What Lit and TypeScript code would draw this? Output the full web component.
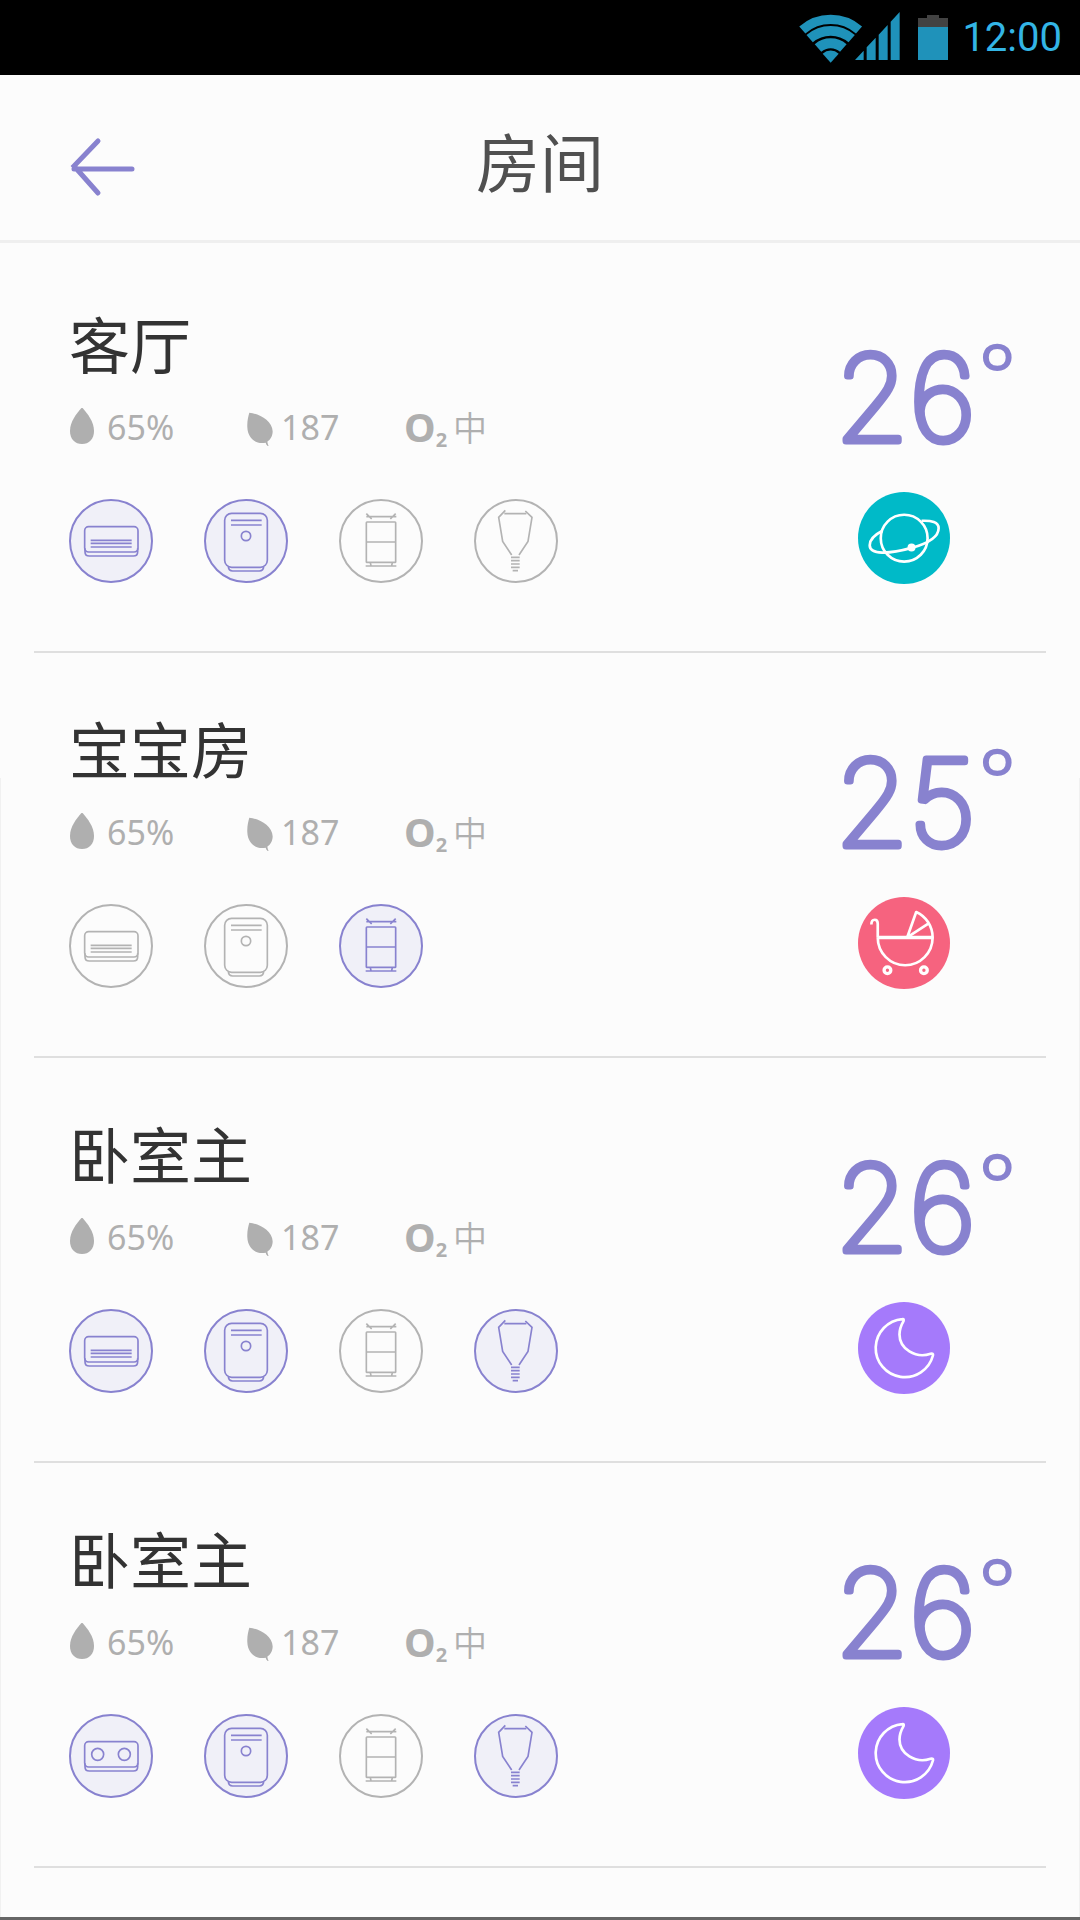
import { LitElement, html, svg, css, nothing } from "lit";
import { customElement, property } from "lit/decorators.js";
import { classMap } from "lit/directives/class-map.js";

type Device = "aircon" | "purifier" | "fridge" | "lamp" | "socket";
type Scene = "planet" | "stroller" | "moon";

interface Room {
  name: string;
  humidity: string;
  air: string;
  oxygen: string;
  temperature: number;
  scene: Scene;
  devices: { kind: Device; on: boolean }[];
}

const ROOMS: Room[] = [
  {
    name: "客厅", humidity: "65%", air: "187", oxygen: "中", temperature: 26, scene: "planet",
    devices: [
      { kind: "aircon", on: true }, { kind: "purifier", on: true },
      { kind: "fridge", on: false }, { kind: "lamp", on: false },
    ],
  },
  {
    name: "宝宝房", humidity: "65%", air: "187", oxygen: "中", temperature: 25, scene: "stroller",
    devices: [
      { kind: "aircon", on: false }, { kind: "purifier", on: false },
      { kind: "fridge", on: true },
    ],
  },
  {
    name: "卧室主", humidity: "65%", air: "187", oxygen: "中", temperature: 26, scene: "moon",
    devices: [
      { kind: "aircon", on: true }, { kind: "purifier", on: true },
      { kind: "fridge", on: false }, { kind: "lamp", on: true },
    ],
  },
  {
    name: "卧室主", humidity: "65%", air: "187", oxygen: "中", temperature: 26, scene: "moon",
    devices: [
      { kind: "socket", on: true }, { kind: "purifier", on: true },
      { kind: "fridge", on: false }, { kind: "lamp", on: true },
    ],
  },
];

const wallUnit = svg`
  <rect x="47" y="83" width="160" height="76" rx="12"/>
  <path d="M48 148v10q0 13 13 13h132q13 0 13-13v-10"/>`;

const DEVICE_ICONS = {
  aircon: svg`${wallUnit}<path d="M65 124H188M65 133H188M65 144H188"/>`,
  socket: svg`${wallUnit}<circle cx="86" cy="121" r="18"/><circle cx="166" cy="121" r="18"/>`,
  purifier: svg`
    <rect x="62" y="43" width="128" height="162" rx="21"/>
    <path d="M73 203q1 13 13 13h80q12 0 13-13M81 64H173M81 78H173"/>
    <circle cx="126" cy="111" r="14"/>`,
  fridge: svg`
    <rect x="82" y="69" width="88" height="121" rx="2"/>
    <path d="M82 129H170M82 53H172M82 44l16 16M170 44l-16 16M80 201H172M94 191l2 9M160 191l-2 9"/>`,
  lamp: svg`
    <path d="M91 44H157M94 34L74 55L86 127L113 168M154 36L174 55L162 127L135 168"/>
    <path d="M111 175H137M111 185H137M111 195H137M111 205H137M116 215H132"/>`,
};

const SCENE_ICONS = {
  planet: svg`
    <circle cx="138" cy="138" r="70"/>
    <path d="M73 116C50 128 35 142 35 159C35 188 92 186 160 167C210 153 241 133 241 108C241 89 220 85 190 86"/>
    <circle class="solid" cx="160" cy="166" r="8"/>`,
  stroller: svg`
    <path d="M40 82Q40 68 50 68Q59 68 59 80V121"/>
    <path class="thick" d="M58 121H225"/>
    <path d="M59 121A82 83 0 0 0 223 121A83 83 0 0 0 174 45L147 121L209 80"/>
    <circle class="thick" cx="88" cy="219" r="10"/><circle class="thick" cx="197" cy="219" r="10"/>`,
  moon: svg`
    <path d="M133 51A87 87 0 1 0 224 160Q226 152 217 155C172 170 124 140 124 97C124 78 129 69 136 57Q138 50 133 51Z"/>`,
};

const DEVICE_LABELS = { aircon: "空调", purifier: "净化器", fridge: "冰箱", lamp: "灯", socket: "插座" };
const SCENE_LABELS = { planet: "星球", stroller: "婴儿车", moon: "月亮" };

@customElement("status-bar")
export class StatusBar extends LitElement {
  static styles = css`
    :host {
      display: flex;
      align-items: center;
      justify-content: flex-end;
      height: 75px;
      padding: 0 18px;
      background: #000;
      color: #33b5e5;
      font: 400 40px/48px Roboto, "Liberation Sans", sans-serif;
    }
    svg { display: block; fill: #1f92ba; }
    .wifi { width: 64px; height: 51px; margin-right: -8px; }
    .signal { width: 45px; height: 51px; margin-right: 18px; }
    .battery { width: 30px; height: 51px; margin-right: 14px; }
    .arc { fill: none; stroke: #1f92ba; }
    .cap { fill: #424242; }
  `;
  render() {
    return html`
      <svg class="wifi" viewBox="0 0 192 153" aria-hidden="true">
        <path class="arc" stroke-width="28" d="M10 54A130 130 0 0 1 180 54"/>
        <path class="arc" stroke-width="29" d="M32 80A96 96 0 0 1 158 80"/>
        <path class="arc" stroke-width="30" d="M57 108A58 58 0 0 1 133 108"/>
        <path d="M95 152L71 125A36 36 0 0 1 119 125Z"/>
      </svg>
      <svg class="signal" viewBox="0 0 135 153" aria-hidden="true">
        <path d="M0 144L26 116V144ZM35 144V106L62 77V144ZM71 144V68L98 39V144ZM107 144V29L134 0V144Z"/>
      </svg>
      <svg class="battery" viewBox="0 0 90 153" aria-hidden="true">
        <path class="cap" d="M27 9H63V18H90V45H0V18H27Z"/><path d="M0 45H90V144H0Z"/>
      </svg>
      <time>12:00</time>`;
  }
}

@customElement("room-card")
export class RoomCard extends LitElement {
  @property({ attribute: false }) room!: Room;

  static styles = css`
    :host {
      display: flex;
      justify-content: space-between;
      margin: 0 34px;
      padding: 59px 30px 67px 35px;
      border-bottom: 2px solid #dfdfdf;
    }
    svg { display: block; }
    .name {
      margin: 0;
      color: #333;
      font: 400 61px/72px "Noto Sans CJK SC", sans-serif;
    }
    .stats {
      display: grid;
      grid-template-columns: 178px 157px auto;
      align-items: center;
      height: 48px;
      margin: 24px 0 48px;
      color: #afafaf;
      font: 400 34px/48px "Noto Sans", "Noto Sans CJK SC", sans-serif;
    }
    .stat { display: flex; align-items: center; gap: 12px; }
    .air { gap: 8px; }
    .stat svg { width: 26px; height: 38px; fill: #afafaf; }
    .oxygen { gap: 6px; }
    .o2 { font-weight: 700; font-size: 40px; }
    .o2 sub { font-size: 20px; line-height: 20px; vertical-align: -5px; }
    .level { font-family: "Noto Sans CJK SC", sans-serif; font-weight: 350; }
    .devices { display: flex; gap: 51px; }
    .device {
      width: 84px;
      height: 84px;
      padding: 0;
      border: 0;
      border-radius: 50%;
      background: none;
      color: #b3b3b3;
    }
    .device svg {
      width: 84px;
      height: 84px;
      fill: none;
      stroke: currentColor;
      stroke-width: 5;
    }
    .device .ring { stroke-width: 6; }
    .device.on { color: #8882cf; background: #f0f0f8; }
    .climate { display: flex; flex-direction: column; margin-top: 29px; }
    .temperature { width: 176px; height: 112px; overflow: visible; }
    .digits, .degree {
      fill: #8882cf;
      stroke: #8882cf;
      stroke-linejoin: round;
    }
    .digits { font-family: Inter, sans-serif; font-size: 119px; font-weight: 100; stroke-width: 7; }
    .degree { font-family: "Noto Sans", sans-serif; font-size: 90px; stroke: none; }
    .scene {
      width: 92px;
      height: 92px;
      margin: 44px 0 0 18px;
      padding: 0;
      border: 0;
      border-radius: 50%;
      background: #00bac8;
    }
    .scene.stroller { background: #f6637f; }
    .scene.moon { background: #a57afb; }
    .scene svg {
      width: 92px;
      height: 92px;
      fill: none;
      stroke: #fff;
      stroke-width: 8;
      stroke-linejoin: round;
    }
    .scene .solid { fill: #fff; }
    .scene .thick { stroke-width: 10; }
  `;

  render() {
    const r = this.room;
    if (!r) return nothing;
    return html`
      <div>
        <h2 class="name">${r.name}</h2>
        <div class="stats">
          <span class="stat">
            <svg viewBox="0 0 78 114" aria-hidden="true">
              <path d="M39 -2C54 15 75 40 75 69C75 94 60 108 39 108C18 108 3 94 3 69C3 40 24 15 39 -2Z"/>
            </svg>${r.humidity}
          </span>
          <span class="stat air">
            <svg viewBox="0 0 78 114" aria-hidden="true">
              <path d="M7 14C35 17 76 37 77 70C77 84 70 96 61 101Q62 108 66 117Q57 111 56 104C28 110 2 92 1 58C0 38 4 25 7 14Z"/>
            </svg>${r.air}
          </span>
          <span class="stat oxygen">
            <span class="o2">O<sub>2</sub></span><span class="level">${r.oxygen}</span>
          </span>
        </div>
        <div class="devices">
          ${r.devices.map((d) => html`
            <button class=${classMap({ device: true, on: d.on })} aria-label=${DEVICE_LABELS[d.kind]} aria-pressed=${d.on}>
              <svg viewBox="0 0 252 252"><circle class="ring" cx="126" cy="126" r="123"/>${DEVICE_ICONS[d.kind]}</svg>
            </button>`)}
        </div>
      </div>
      <div class="climate">
        <svg class="temperature" viewBox="0 0 176 112">
          <text class="digits" x="-5" y="105">${r.temperature}</text>
          <text class="degree" x="138" y="72">°</text>
        </svg>
        <button class="scene ${r.scene}" aria-label=${SCENE_LABELS[r.scene]}>
          <svg viewBox="0 0 275 275">${SCENE_ICONS[r.scene]}</svg>
        </button>
      </div>`;
  }
}

@customElement("app-root")
export class AppRoot extends LitElement {
  static styles = css`
    :host {
      display: flex;
      flex-direction: column;
      box-sizing: border-box;
      min-height: 100vh;
      background: #fcfcfc;
      border-bottom: 3px solid #666;
    }
    .header {
      display: grid;
      grid-template-columns: 1fr auto 1fr;
      align-items: center;
      height: 163px;
      padding: 2px 70px 0;
      border-bottom: 3px solid #efefef;
    }
    .back { width: 66px; height: 76px; }
    .back svg {
      display: block;
      width: 66px;
      height: 76px;
      fill: none;
      stroke: #8882cf;
      stroke-width: 5;
      stroke-linecap: round;
    }
    .title {
      margin: 0;
      color: #505050;
      font: 400 64px/80px "Noto Sans CJK SC", sans-serif;
    }
    .rooms {
      flex: 1;
      padding-top: 5px;
      background:
        linear-gradient(#f1f1f1, #f1f1f1) left bottom / 1px calc(100% - 535px) no-repeat,
        linear-gradient(#f1f1f1, #f1f1f1) right bottom / 1px calc(100% - 535px) no-repeat;
    }
  `;
  render() {
    return html`
      <status-bar></status-bar>
      <header class="header">
        <a class="back" href="#" aria-label="返回">
          <svg viewBox="0 0 66 76"><path d="M28 20L4 45L28 72M4 48H62"/></svg>
        </a>
        <h1 class="title">房间</h1>
      </header>
      <main class="rooms">
        ${ROOMS.map((room) => html`<room-card .room=${room}></room-card>`)}
      </main>`;
  }
}
